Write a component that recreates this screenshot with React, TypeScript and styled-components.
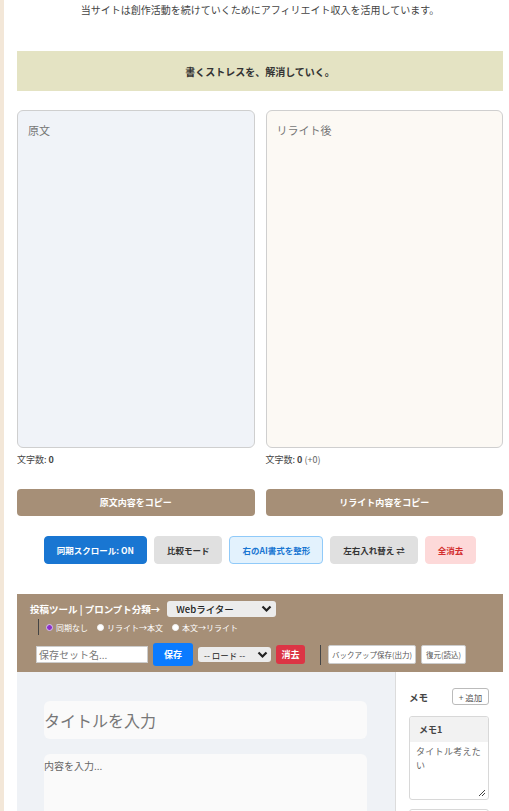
import React from "react";
import styled, { createGlobalStyle, css } from "styled-components";

const Global = createGlobalStyle`
  html, body { margin: 0; padding: 0; background: #fff; }
  body { font-family: "Noto Sans CJK JP", "Noto Sans", sans-serif; color: #333; }
  * { box-sizing: border-box; }
`;

const Page = styled.div`
  border-left: 4px solid #f3e7d8;
  min-height: 811px;
  padding: 0 6px 0 13px;
  overflow: hidden;
`;

const Note = styled.p`
  margin: 0;
  padding-top: 2px;
  font-size: 10px;
  line-height: 15px;
  text-align: center;
  color: #444;
`;

const Banner = styled.div`
  margin-top: 34px;
  height: 40px;
  background: #e4e3c3;
  display: flex;
  align-items: center;
  justify-content: center;
  font-size: 10px;
  font-weight: 700;
  color: #333;
`;

const Columns = styled.div<{ $top: number }>`
  display: grid;
  grid-template-columns: 1fr 1fr;
  column-gap: 11px;
  margin-top: ${(p) => p.$top}px;
`;

const Pane = styled.div<{ $bg: string }>`
  height: 338px;
  border: 1px solid #cfcfcf;
  border-radius: 6px;
  background: ${(p) => p.$bg};
  padding: 11px 10px;
  font-size: 11px;
  line-height: 16px;
  color: #777;
`;

const Count = styled.div`
  margin-top: 5px;
  font-size: 9px;
  line-height: 14px;
  color: #444;
  b { font-weight: 700; }
  span { color: #666; }
`;

const CopyButton = styled.button`
  height: 27px;
  border: none;
  border-radius: 4px;
  background: #a68f77;
  color: #fff;
  font-family: inherit;
  font-size: 9px;
  font-weight: 700;
`;

const ActionRow = styled.div`
  margin-top: 20px;
  display: flex;
  justify-content: center;
  gap: 7px;
`;

type Tone = "blue" | "gray" | "light" | "danger";
const tones: Record<Tone, ReturnType<typeof css>> = {
  blue: css`background: #1976d2; color: #fff; border: 1px solid #1976d2;`,
  gray: css`background: #e0e0e0; color: #333; border: 1px solid #e0e0e0;`,
  light: css`background: #e3f2fd; color: #1976d2; border: 1px solid #90caf9;`,
  danger: css`background: #fdd9d9; color: #d32f2f; border: 1px solid #fdd9d9;`,
};

const ActionButton = styled.button<{ $tone: Tone }>`
  height: 28px;
  padding: 0 12px;
  border-radius: 4px;
  font-family: inherit;
  font-size: 8.5px;
  font-weight: 700;
  white-space: nowrap;
  ${(p) => tones[p.$tone]}
`;

const Toolbar = styled.div`
  margin-top: 30px;
  background: #a68f77;
  padding: 7px 0 6px 13px;
  color: #fff;
`;

const ToolRow = styled.div`
  display: flex;
  align-items: center;
  height: 16px;
`;

const ToolTitle = styled.span`
  font-size: 9.5px;
  font-weight: 700;
  margin-right: 7px;
  white-space: nowrap;
`;

const Select = styled.div<{ $w: number; $h: number }>`
  width: ${(p) => p.$w}px;
  height: ${(p) => p.$h}px;
  background: #ececec;
  border-radius: 3px;
  color: #222;
  display: flex;
  align-items: center;
  justify-content: space-between;
  padding: 0 4px 0 9px;
  font-size: 9.5px;
  font-weight: 500;
`;

const RadioRow = styled.div`
  display: flex;
  align-items: center;
  margin: 2px 0 0 8px;
  height: 16px;
  border-left: 1px solid #444;
  padding-left: 7px;
  gap: 9px;
`;

const RadioItem = styled.span`
  display: inline-flex;
  align-items: center;
  gap: 3px;
  font-size: 8px;
  color: #fff;
  white-space: nowrap;
`;

const Dot = styled.span<{ $on?: boolean }>`
  width: 7px;
  height: 7px;
  border-radius: 50%;
  background: ${(p) => (p.$on ? "#8b2fc9" : "#fff")};
  border: ${(p) => (p.$on ? "1.5px solid #d9c7ee" : "1px solid #f5f5f5")};
`;

const SaveRow = styled.div`
  display: flex;
  align-items: center;
  margin: 8px 0 0 6px;
  height: 23px;
`;

const NameInput = styled.div`
  width: 112px;
  height: 17px;
  background: #fff;
  border: 1px solid #ccc;
  font-size: 10px;
  line-height: 15px;
  color: #777;
  padding-left: 2px;
`;

const SmallButton = styled.button<{ $bg: string; $w: number; $h: number }>`
  width: ${(p) => p.$w}px;
  height: ${(p) => p.$h}px;
  margin-left: 5px;
  border: none;
  border-radius: 3px;
  background: ${(p) => p.$bg};
  color: #fff;
  font-family: inherit;
  font-size: 9px;
  font-weight: 700;
  padding: 0;
`;

const LoadSelect = styled.div`
  width: 73px;
  height: 15px;
  margin-left: 5px;
  border-radius: 3px;
  background: #ececec;
  color: #222;
  display: flex;
  align-items: center;
  justify-content: space-between;
  padding: 0 3px 0 6px;
  font-size: 8.5px;
`;

const Divider = styled.span`
  width: 1px;
  height: 20px;
  background: #444;
  margin: 0 7px 0 15px;
`;

const OutlineButton = styled.button<{ $w: number }>`
  width: ${(p) => p.$w}px;
  height: 19px;
  margin-right: 5px;
  border: 1px solid #ccc;
  border-radius: 2px;
  background: #fff;
  color: #555;
  font-family: inherit;
  font-size: 7.5px;
  padding: 0;
  white-space: nowrap;
`;

const Workspace = styled.div`
  display: grid;
  grid-template-columns: 378px 1fr;
  height: 150px;
`;

const EditorArea = styled.div`
  background: #eff2f6;
  padding: 29px 28px 0 27px;
`;

const TitleField = styled.div`
  height: 38px;
  background: #fafafa;
  border-radius: 6px;
  display: flex;
  align-items: center;
  font-size: 16px;
  color: #777;
`;

const BodyField = styled.div`
  margin-top: 15px;
  height: 80px;
  background: #fafafa;
  border-radius: 6px;
  padding-top: 4px;
  font-size: 10px;
  line-height: 16px;
  color: #666;
`;

const Side = styled.div`
  border-left: 1px solid #dcdcdc;
  background: #fff;
  padding: 16px 14px 0 13px;
`;

const SideHead = styled.div`
  display: flex;
  align-items: center;
  justify-content: space-between;
  font-size: 9.5px;
  font-weight: 700;
  color: #444;
`;

const AddButton = styled.button`
  width: 37px;
  height: 17px;
  border: 1px solid #bbb;
  border-radius: 3px;
  background: #fff;
  color: #555;
  font-family: inherit;
  font-size: 8.5px;
  padding: 0;
`;

const MemoCard = styled.div`
  margin-top: 11px;
  height: 84px;
  border: 1px solid #d8d8d8;
  border-radius: 3px;
  position: relative;
  overflow: hidden;
`;

const MemoHead = styled.div`
  height: 25px;
  background: #f2f2f2;
  padding-left: 9px;
  display: flex;
  align-items: center;
  font-size: 9px;
  font-weight: 700;
  color: #444;
`;

const MemoBody = styled.div`
  padding: 3px 6px;
  font-size: 9px;
  line-height: 14px;
  color: #666;
  letter-spacing: 0.3px;
`;

const Grip = styled.svg`
  position: absolute;
  right: 2px;
  bottom: 2px;
`;

const NextCard = styled.div`
  margin-top: 9px;
  height: 20px;
  border: 1px solid #d8d8d8;
  border-radius: 3px;
`;

const Chevron = () => (
  <svg width="11" height="8" viewBox="0 0 11 8">
    <polyline points="1.5,1.5 5.5,5.5 9.5,1.5" fill="none" stroke="#222" strokeWidth="2.2" />
  </svg>
);

export default function App() {
  return (
    <>
      <Global />
      <Page>
        <Note>当サイトは創作活動を続けていくためにアフィリエイト収入を活用しています。</Note>
        <Banner>書くストレスを、解消していく。</Banner>
        <Columns $top={19}>
          <div>
            <Pane $bg="#f0f3f8">原文</Pane>
            <Count>文字数: <b>0</b></Count>
          </div>
          <div>
            <Pane $bg="#fcf9f4">リライト後</Pane>
            <Count>文字数: <b>0</b> <span>(+0)</span></Count>
          </div>
        </Columns>
        <Columns $top={22}>
          <CopyButton>原文内容をコピー</CopyButton>
          <CopyButton>リライト内容をコピー</CopyButton>
        </Columns>
        <ActionRow>
          <ActionButton $tone="blue">同期スクロール: ON</ActionButton>
          <ActionButton $tone="gray">比較モード</ActionButton>
          <ActionButton $tone="light">右のAI書式を整形</ActionButton>
          <ActionButton $tone="gray">左右入れ替え ⇄</ActionButton>
          <ActionButton $tone="danger">全消去</ActionButton>
        </ActionRow>
        <Toolbar>
          <ToolRow>
            <ToolTitle>投稿ツール | プロンプト分類→</ToolTitle>
            <Select $w={109} $h={16}>
              Webライター
              <Chevron />
            </Select>
          </ToolRow>
          <RadioRow>
            <RadioItem><Dot $on />同期なし</RadioItem>
            <RadioItem><Dot />リライト→本文</RadioItem>
            <RadioItem><Dot />本文→リライト</RadioItem>
          </RadioRow>
          <SaveRow>
            <NameInput>保存セット名...</NameInput>
            <SmallButton $bg="#0a7bff" $w={40} $h={23}>保存</SmallButton>
            <LoadSelect>
              -- ロード --
              <Chevron />
            </LoadSelect>
            <SmallButton $bg="#dc3545" $w={29} $h={19}>消去</SmallButton>
            <Divider />
            <OutlineButton $w={88}>バックアップ保存(出力)</OutlineButton>
            <OutlineButton $w={45}>復元(読込)</OutlineButton>
          </SaveRow>
        </Toolbar>
        <Workspace>
          <EditorArea>
            <TitleField>タイトルを入力</TitleField>
            <BodyField>内容を入力...</BodyField>
          </EditorArea>
          <Side>
            <SideHead>
              メモ
              <AddButton>+ 追加</AddButton>
            </SideHead>
            <MemoCard>
              <MemoHead>メモ1</MemoHead>
              <MemoBody>タイトル考えたい</MemoBody>
              <Grip width="8" height="8" viewBox="0 0 8 8">
                <line x1="1" y1="7" x2="7" y2="1" stroke="#444" strokeWidth="1" />
                <line x1="4" y1="7" x2="7" y2="4" stroke="#444" strokeWidth="1" />
              </Grip>
            </MemoCard>
            <NextCard />
          </Side>
        </Workspace>
      </Page>
    </>
  );
}
